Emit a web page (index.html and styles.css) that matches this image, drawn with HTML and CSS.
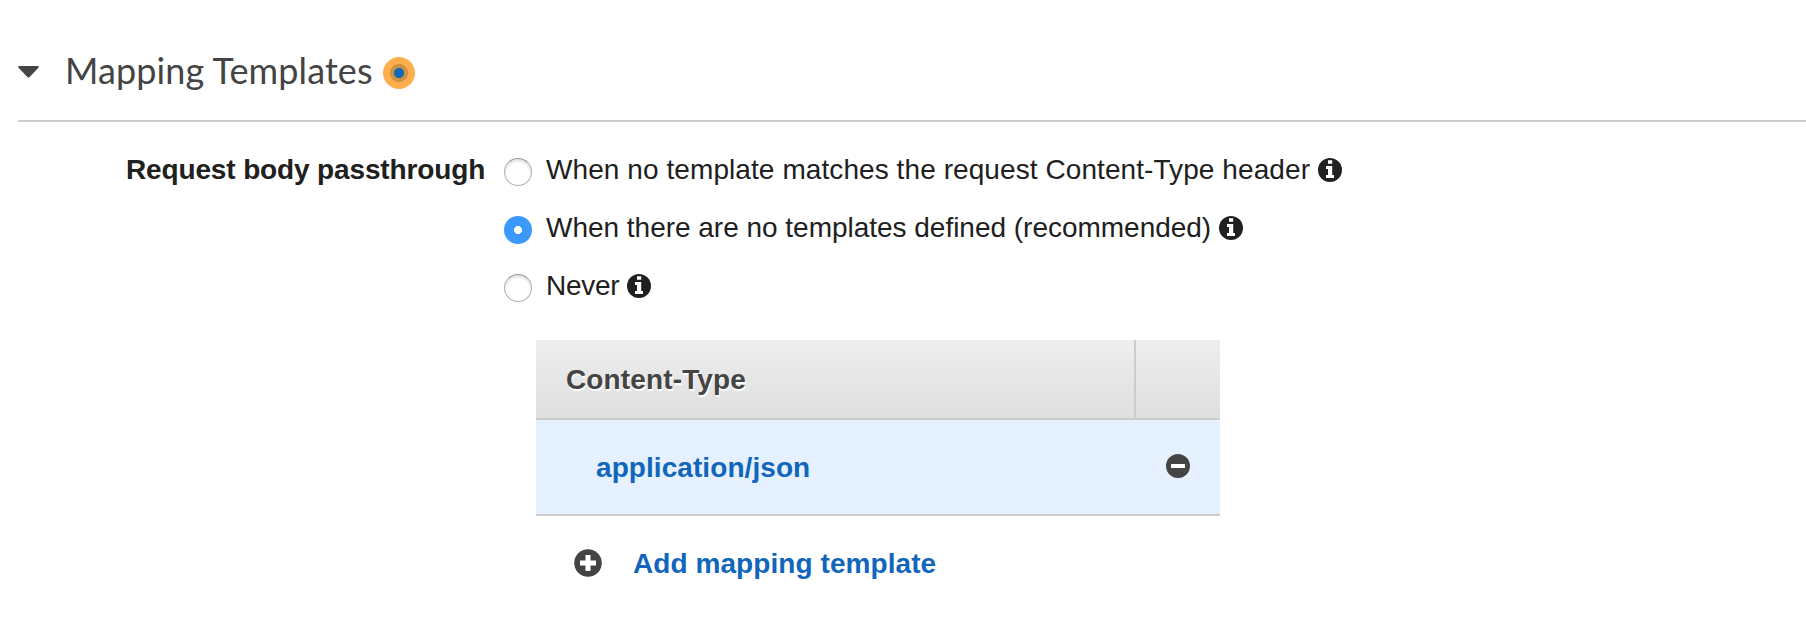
FILE: index.html
```html
<!DOCTYPE html>
<html lang="en">
<head>
<meta charset="utf-8">
<title>Mapping Templates</title>
<link rel="stylesheet" href="styles.css">
</head>
<body>
<svg class="defs" width="0" height="0" aria-hidden="true">
  <symbol id="info" viewBox="0 0 24 24">
    <circle cx="12" cy="12" r="12" fill="#202020"/>
    <path d="M10 2.200h4.200v3.600H10zM8 8h6.200v9H16v3H8v-3h2v-6H8z" fill="#fff"/>
  </symbol>
</svg>
<main class="panel">
  <header class="panel-header">
    <svg class="caret" viewBox="0 0 21 12"><path d="M.8 0h19.400q1.100.8.200 1.800l-8.500 9q-1.400 1.500-2.800 0L.6 1.800Q-.3.800.8 0z" fill="#444"/></svg>
    <h2 class="title">Mapping Templates</h2>
    <span class="badge"></span>
  </header>
  <section class="field">
    <div class="label"><span class="t-label">Request body passthrough</span></div>
    <div class="options">
      <label class="option"><span class="radio"></span><span class="text t-one">When no template matches the request Content-Type header</span><svg class="info"><use href="#info"/></svg></label>
      <label class="option"><span class="radio checked"></span><span class="text t-two">When there are no templates defined (recommended)</span><svg class="info"><use href="#info"/></svg></label>
      <label class="option"><span class="radio"></span><span class="text t-three">Never</span><svg class="info"><use href="#info"/></svg></label>
    </div>
  </section>
  <section class="templates">
    <div class="table-head"><div class="head-cell"><span class="t-type">Content-Type</span></div><div class="head-action"></div></div>
    <div class="table-row">
      <a class="link t-json">application/json</a>
      <svg class="minus" viewBox="0 0 24 24"><circle cx="12" cy="12" r="12" fill="#444"/><rect x="5" y="10" width="14" height="4" rx=".6" fill="#fff"/></svg>
    </div>
    <div class="add-row">
      <svg class="plus" viewBox="0 0 28 28"><circle cx="14" cy="14" r="13.800" fill="#444"/><path d="M11.500 6h5v5.500H22v5h-5.500V22h-5v-5.500H6v-5h5.500z" fill="#fff"/></svg>
      <a class="link t-add">Add mapping template</a>
    </div>
  </section>
</main>
</body>
</html>
```
FILE: styles.css
```css
body {
  margin: 0;
  background: #fff;
  color: #202020;
  font: 28px/58px "Liberation Sans", Arial, sans-serif;
  overflow: hidden;
}
.defs { display: block; }
.panel { padding-left: 18px; }
.panel-header {
  display: flex;
  align-items: center;
  height: 100px;
  padding-top: 20px;
  border-bottom: 2px solid #ccc;
}
.caret { width: 21px; height: 12px; margin-top: 3px; }
.title {
  margin: 0 0 0 26px;
  width: 307px;
  white-space: nowrap;
  color: #444;
  font: 400 36px/44px Lato, sans-serif;
  letter-spacing: 0.1px;
}
.badge {
  width: 32px;
  height: 32px;
  margin: 6px 0 0 11px;
  border-radius: 50%;
  background: radial-gradient(circle, #1166bb 4.700px, #cc923f 5.300px, #cc923f 8.700px, #ffae4d 9.300px);
}
.field { display: flex; padding-top: 19px; }
.label {
  width: 357px;
  padding-left: 108px;
  font-weight: bold;
  white-space: nowrap;
  letter-spacing: -0.14px;
}
.options { margin-left: 21px; }
.option { display: flex; align-items: center; height: 58px; white-space: nowrap; }
.t-one { letter-spacing: 0.08px; }
.t-two { letter-spacing: -0.02px; }
.t-three { letter-spacing: -0.3px; }
.radio {
  box-sizing: border-box;
  width: 28px;
  height: 28px;
  margin: 4px 14px 0 0;
  border: 1px solid #b2b2b2;
  border-top-color: #999;
  border-radius: 50%;
  box-shadow: inset 0 2px 3px #ddd;
}
.radio.checked {
  border: 0;
  background: radial-gradient(circle, #fff 3.700px, #3b99fc 4.300px);
  box-shadow: none;
}
.info { width: 24px; height: 24px; margin-left: 8px; }
.templates { width: 684px; margin: 25px 0 0 518px; }
.table-head {
  display: flex;
  height: 78px;
  border-bottom: 2px solid #ccc;
  background: linear-gradient(#eee, #dfdfdf);
  color: #444;
  font-weight: bold;
  line-height: 80px;
  text-shadow: 1px 2px 0 #fff;
}
.head-cell { width: 568px; padding-left: 30px; border-right: 2px solid #ccc; }
.head-action { flex: 1; }
.t-type { letter-spacing: 0.14px; }
.table-row {
  display: flex;
  align-items: center;
  justify-content: space-between;
  height: 94px;
  padding: 0 30px 0 60px;
  border-bottom: 2px solid #ccc;
  background: #e5f1fe;
}
.minus { width: 24px; height: 24px; margin-top: -2px; }
.add-row { display: flex; align-items: center; height: 93px; padding-left: 38px; }
.plus { width: 28px; height: 28px; margin-right: 31px; }
.link { color: #1166bb; font-weight: bold; white-space: nowrap; line-height: 58px; letter-spacing: 0.07px; }
.t-json { padding-top: 2px; }
.t-add { padding-top: 3px; }
```
